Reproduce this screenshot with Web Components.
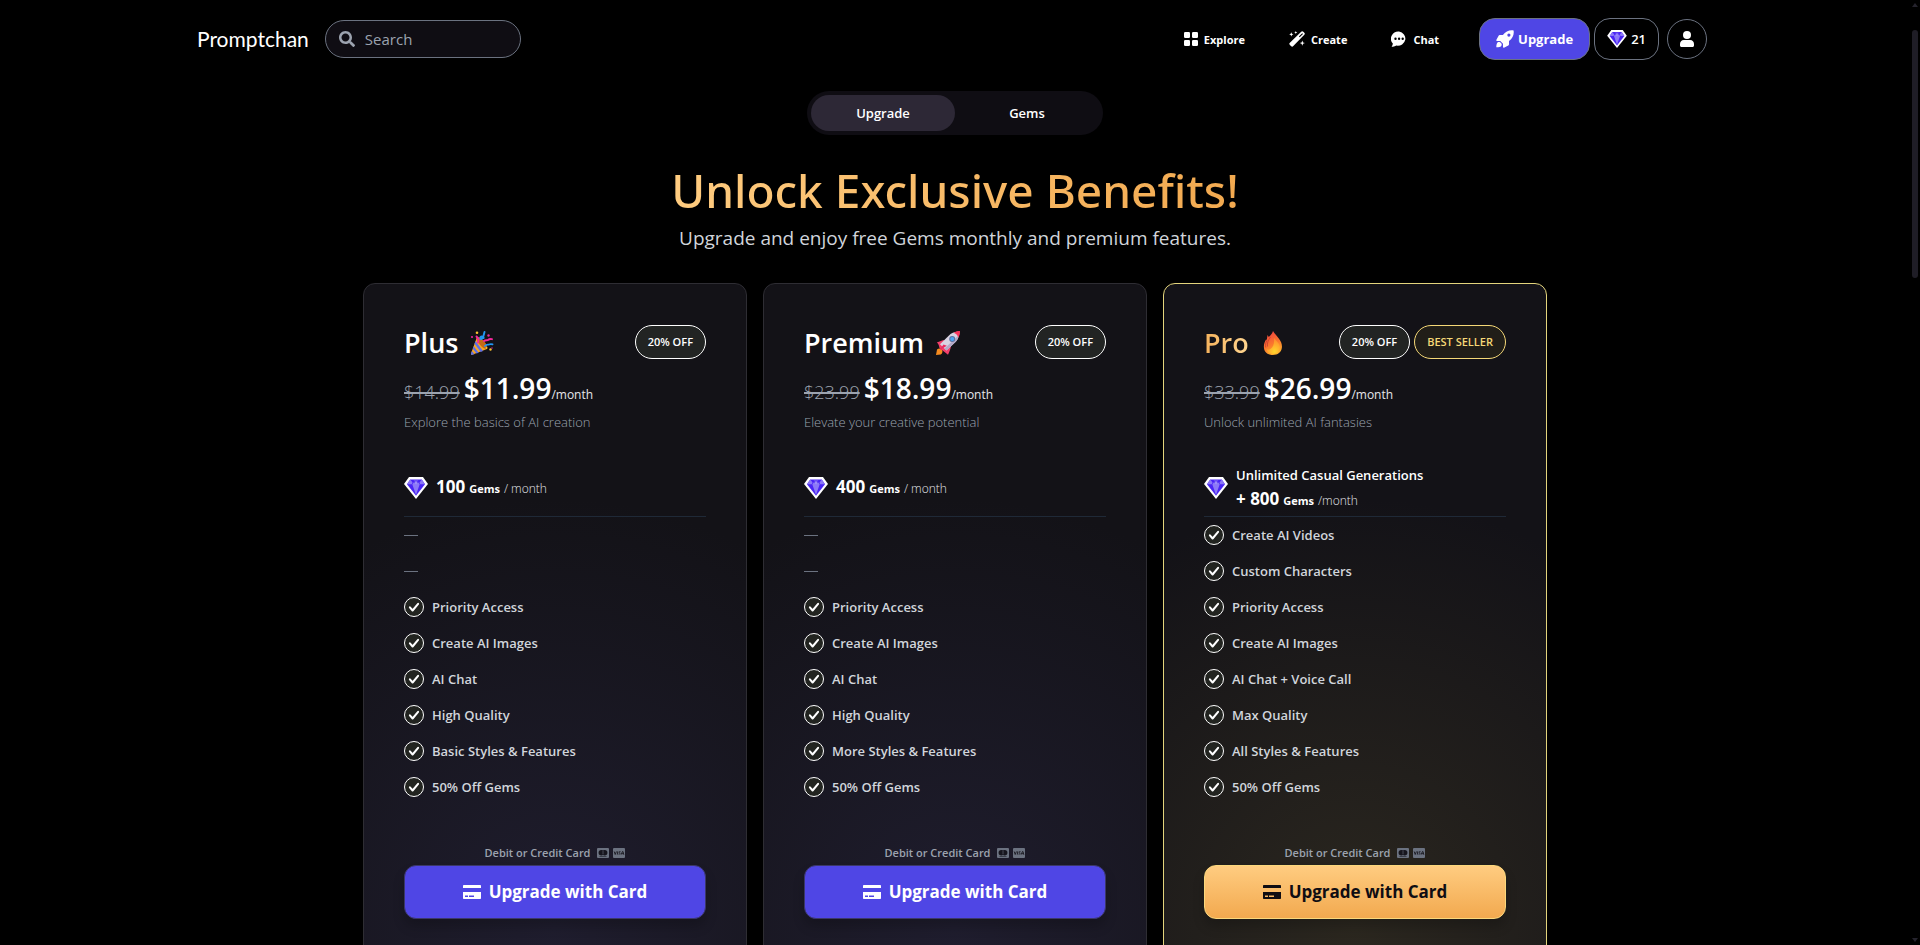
<!DOCTYPE html>
<html lang="en">
<head>
<meta charset="UTF-8">
<meta name="viewport" content="width=device-width, initial-scale=1.0">
<title>Promptchan - Upgrade</title>
<style>
    * { box-sizing: border-box; }
    body {
        margin: 0;
        background: #000;
        color: #fff;
        font-family: "Open Sans", "Noto Sans", sans-serif;
        font-size: 13px;
    }
</style>
</head>
<body>
<app-shell>
    <site-header slot="header">
        <search-box placeholder="Search"></search-box>
        <nav-link slot="links" icon="grid" href="#explore">Explore</nav-link>
        <nav-link slot="links" icon="wand" href="#create">Create</nav-link>
        <nav-link slot="links" icon="chat" href="#chat">Chat</nav-link>
        <header-button slot="actions" variant="primary" icon="rocket">Upgrade</header-button>
        <header-button slot="actions" icon="gem">21</header-button>
        <header-button slot="actions" variant="round" icon="user" label="Account"></header-button>
    </site-header>

    <plan-tabs></plan-tabs>
    <page-heading>
        Unlock Exclusive Benefits!
        <span slot="subtitle">Upgrade and enjoy free Gems monthly and premium features.</span>
    </page-heading>

    <plan-grid>
        <plan-card name="Plus" emoji="party" old-price="$14.99" price="$11.99" gems="100"
            description="Explore the basics of AI creation">
            <plan-feature empty></plan-feature>
            <plan-feature empty></plan-feature>
            <plan-feature>Priority Access</plan-feature>
            <plan-feature>Create AI Images</plan-feature>
            <plan-feature>AI Chat</plan-feature>
            <plan-feature>High Quality</plan-feature>
            <plan-feature>Basic Styles &amp; Features</plan-feature>
            <plan-feature>50% Off Gems</plan-feature>
        </plan-card>
        <plan-card name="Premium" emoji="ship" old-price="$23.99" price="$18.99" gems="400"
            description="Elevate your creative potential">
            <plan-feature empty></plan-feature>
            <plan-feature empty></plan-feature>
            <plan-feature>Priority Access</plan-feature>
            <plan-feature>Create AI Images</plan-feature>
            <plan-feature>AI Chat</plan-feature>
            <plan-feature>High Quality</plan-feature>
            <plan-feature>More Styles &amp; Features</plan-feature>
            <plan-feature>50% Off Gems</plan-feature>
        </plan-card>
        <plan-card featured name="Pro" emoji="fire" old-price="$33.99" price="$26.99" gems="800"
            bonus="Unlimited Casual Generations" description="Unlock unlimited AI fantasies">
            <plan-feature>Create AI Videos</plan-feature>
            <plan-feature>Custom Characters</plan-feature>
            <plan-feature>Priority Access</plan-feature>
            <plan-feature>Create AI Images</plan-feature>
            <plan-feature>AI Chat + Voice Call</plan-feature>
            <plan-feature>Max Quality</plan-feature>
            <plan-feature>All Styles &amp; Features</plan-feature>
            <plan-feature>50% Off Gems</plan-feature>
        </plan-card>
    </plan-grid>
</app-shell>

<script>
const ICONS = {
    search: ['0 0 512 512', '<path fill="currentColor" d="M505 442.700 405.300 343c-4.500-4.500-10.600-7-17-7H372c27.600-35.300 44-79.700 44-128C416 93.100 322.900 0 208 0S0 93.100 0 208s93.100 208 208 208c48.300 0 92.700-16.400 128-44v16.300c0 6.400 2.500 12.500 7 17l99.700 99.700c9.400 9.400 24.600 9.400 33.900 0l28.300-28.300c9.400-9.400 9.400-24.600.1-34zM208 336c-70.700 0-128-57.200-128-128 0-70.700 57.200-128 128-128 70.700 0 128 57.200 128 128 0 70.700-57.200 128-128 128z"/>'],
    grid: ['0 0 14 14', '<g fill="currentColor"><rect width="6" height="6" rx="1.300"/><rect x="8" width="6" height="6" rx="1.300"/><rect y="8" width="6" height="6" rx="1.300"/><rect x="8" y="8" width="6" height="6" rx="1.300"/></g>'],
    wand: ['0 0 16 16', '<g fill="currentColor"><path fill-rule="evenodd" d="M12.200.700a1.500 1.500 0 0 1 2.100 0l1 1a1.500 1.500 0 0 1 0 2.100L4.300 15.100a1.600 1.600 0 0 1-2.300 0L.9 14a1.600 1.600 0 0 1 0-2.300zM13.200 2.200 9.900 5.500l.8.800L14 3z"/><path d="m2.300 1.200.6 1.500 1.500.6-1.500.6-.6 1.500-.6-1.500-1.500-.6 1.500-.6zM6.800 0l.4 1.100 1.100.4-1.100.4-.4 1.100-.4-1.100-1.100-.4 1.100-.4zM13.300 9.500l.7 1.900 1.900.7-1.900.7-.7 1.900-.7-1.900-1.900-.7 1.900-.7z"/></g>'],
    chat: ['0 0 16 16', '<path fill="currentColor" fill-rule="evenodd" d="M8 .500a7.500 7 0 1 1-2.600 14.100C4 15.600 2.100 15.900.6 15.500c.8-.9 1.300-2 1.200-3.100A7.500 7.200 0 0 1 8 .500zM4.500 6.500a1.200 1.200 0 1 0 0 2.400 1.200 1.200 0 0 0 0-2.400zm3.600 0a1.200 1.200 0 1 0 0 2.400 1.200 1.200 0 0 0 0-2.400zm3.600 0a1.200 1.200 0 1 0 0 2.400 1.200 1.200 0 0 0 0-2.400z"/>'],
    rocket: ['0 0 18 18', '<path fill="currentColor" fill-rule="evenodd" d="M17.600.4C13.500-.3 9.600 1.300 6.900 5H3.700c-.5 0-.9.300-1.100.7L.3 10c-.2.500.1 1 .7 1h3.300L7 13.700V17c0 .6.500.9 1 .7l4.300-2.300c.4-.2.700-.6.700-1.100v-3.200c3.700-2.700 5.300-6.600 4.600-10.700zM12.900 6.700a1.600 1.600 0 1 1 0-3.200 1.600 1.600 0 0 1 0 3.200zM1.700 12.200c1.200-.6 2.700-.2 3.300.8.900.8 1 2.200.1 3.200-.9.900-3 1.200-4.800 1.100 0-1.900.3-4 1.400-5.100z"/>'],
    user: ['0 0 14 16', '<g fill="currentColor"><circle cx="7" cy="4" r="4"/><path d="M3.800 9h6.400C12.500 9 14 10.700 14 13v1.500c0 .8-.7 1.500-1.500 1.500h-11C.7 16 0 15.300 0 14.500V13c0-2.300 1.500-4 3.800-4z"/></g>'],
    gem: ['0 0 24 22', '<path fill="#fff" d="M5 0h14l5 7-12 15L0 7z"/><path fill="#4a25f5" d="M6.200 2.500h11.600L21 7.200l-9 11.600L3 7.200z"/><path fill="#8b78f7" d="M3 7.200 6.200 2.500 8.500 5.500 7.800 7.200zM21 7.200l-3.200-4.700-2.300 3 .7 1.700zM8.300 7.200l1.300-1.700h4.800l1.300 1.700L12 18z"/><path fill="#6a4df7" d="m9.500 3 2.500 3.800L14.500 3z"/><path fill="#a99bfa" d="m12 3.800 1 2.200-1 1.500L11 6z"/>'],
    check: ['0 0 20 20', '<circle cx="10" cy="10" r="9.500" fill="#222420" stroke="#fff"/><path fill="none" stroke="#fff" stroke-width="2" stroke-linecap="round" stroke-linejoin="round" d="m5.900 10.300 2.700 3.200 5.500-6.700"/>'],
    card: ['0 0 18 14', '<path fill="currentColor" fill-rule="evenodd" d="M1 0h16c.6 0 1 .4 1 1v2H0V1c0-.6.400-1 1-1zM0 7h18v6c0 .6-.4 1-1 1H1c-.6 0-1-.4-1-1zm2 3.500V12h3v-1.500zm4 0V12h5v-1.500z"/>'],
    mastercard: ['0 0 12 10', '<rect width="12" height="10" rx="1" fill="#6b7280"/><circle cx="4.300" cy="4.700" r="2.700" fill="#17161e"/><circle cx="7.700" cy="4.700" r="2.700" fill="#17161e"/><path stroke="#6b7280" stroke-width=".6" d="M6 3v3.400"/><path stroke="#3d414c" d="M2.500 8.500h7"/>'],
    visa: ['0 0 12 10', '<rect width="12" height="10" rx="1" fill="#6b7280"/><path fill="none" stroke="#17161e" stroke-width=".9" d="m1.200 3.500 1 3 1.200-3M4.800 3.300l-.5 3.300M7.500 3.700c-1.600-.5-2 .8-.9 1.200 1 .5.300 1.600-1 1.200M8 6.700l1.500-3.200h.5l.8 3.200M9 5.700h1.500"/>'],
    party: ['0 0 24 24', '<path fill="#f5a623" d="M7 6 1 22.500c-.3.900.4 1.500 1.200 1.200L17 18C15 12 12 8 7 6z"/><path fill="#5b6ee8" d="m5.500 10 7.500 10-2.300.9-6.200-8.200zM3.700 15.200l5 6.500-2.200.8-3.700-4.800zM1.900 20l2.500 3.200-2.200.6c-.8.200-1.500-.4-1.200-1.300z"/><ellipse cx="12" cy="12" rx="2.800" ry="7.500" transform="rotate(-40 12 12)" fill="#c46a16"/><path fill="none" stroke="#f3289b" stroke-width="1.900" stroke-linecap="round" d="M6.500 5.500c1.500 1.500 2.200 4 1.500 6M14 10c2-1.500 3-.2 4-1 1.300-1.200 2.500-1.300 4-.8"/><path fill="none" stroke="#2196f3" stroke-width="1.900" stroke-linecap="round" d="M14.500 1c-.6 2-.6 4-2 6-1 2-3 .6-2-.8 1-1.200 3-.5 3.200.8M15 15c1.500-2 3-1 4-1.500 1.300-.6 2-.6 3.500-.2"/><g fill="#f9c22e"><circle cx="7" cy="1.800" r="1.300"/><circle cx="16.500" cy="17" r="1"/><circle cx="20.500" cy="18.500" r="1.200"/></g><g fill="#e9289b"><circle cx="18.500" cy="4.500" r="1.200"/><circle cx="2" cy="6" r="1.100"/><circle cx="22" cy="17" r=".7"/></g>'],
    ship: ['0 0 24 24', '<path fill="#f58b1f" d="M1 18.500c1.500-1.500 4-1.400 5 .3 1 1.800.4 3.400-1.200 4.700L0 24z"/><path fill="#f43f6b" d="M7.500 9 .8 11.500c1.700 1.200 2.200 2.900 2.700 5.500l8.500 6.800c1.200-2.800 2.700-5.600 3-9z"/><path fill="#d9d3e3" d="M14.500 3C18 1 21 .4 23.500.500c.2 3.500-1 7-3.500 10l-9.500 9-6.500-6.300z"/><path fill="#b4a8c7" d="M20 10.500 10.500 19.500l-2-2L22.500 4.500c-.4 2.200-1.200 4.200-2.500 6z"/><path fill="#f8355c" d="M17.500 1.700C20 .4 22 0 24 0c0 2.300-.4 4.200-1.500 6.400-.8-2.200-2.600-4-5-4.700z"/><path fill="#e92d62" d="m7.500 13.500 3.300 1.300-7 4.500c1-2 2.300-4 3.700-5.800z"/><circle cx="16.200" cy="8" r="3" fill="#5c6f9e"/><circle cx="16.200" cy="8" r="2" fill="#4ca7f2"/>'],
    fire: ['0 0 20 24', '<defs><linearGradient id="flame" x1=".3" y1="0" x2=".7" y2="1"><stop offset="0" stop-color="#ee3f40"/><stop offset=".55" stop-color="#fb7a2c"/><stop offset="1" stop-color="#ffb52b"/></linearGradient><radialGradient id="core" cx=".6" cy=".85" r=".8"><stop offset="0" stop-color="#ffd52d"/><stop offset="1" stop-color="#ff8a2c"/></radialGradient></defs><path fill="url(#flame)" d="M10 0c1.500 2.600 4 5 6 7.700 2.200 3 3.200 5.500 2.900 8.800-.5 4.800-4.300 7.500-9 7.500-5 0-8.800-2.800-9-7.800-.2-3.500 1-6 2.300-8L3.700 9.500 4.500 4l1.300 2C7.500 4.500 9.200 2.700 10 0z"/><path fill="none" stroke="#c93b30" stroke-width=".8" d="M4 9.500c-1.500 2.500-1.700 4.500-1.200 7M7.500 6c-2.500 3.500-3.500 6-3 9.500"/><path fill="url(#core)" d="M11 7c2.500 3 6.300 6 5.900 10-.4 3.900-3.100 6-6.900 6-3.700 0-6-1.800-6.300-5 .9 1 2 1 3.200.3C10.500 16 11.500 12.500 11 7z"/>']
};

class AppIcon extends HTMLElement {
    static get observedAttributes() {
        return ['name'];
    }

    constructor() {
        super();
        this.attachShadow({ mode: 'open' });
    }

    attributeChangedCallback() {
        const [box, body] = ICONS[this.getAttribute('name')] || ['0 0 16 16', ''];
        this.shadowRoot.innerHTML = `
            <style>
                :host { display: inline-block; flex: none; width: 16px; height: 16px; }
                svg { display: block; width: 100%; height: 100%; }
            </style>
            <svg viewBox="${box}" aria-hidden="true">${body}</svg>
        `;
    }
}

class AppShell extends HTMLElement {
    connectedCallback() {
        this.attachShadow({ mode: 'open' });
        this.shadowRoot.innerHTML = `
            <style>
                :host {
                    display: grid;
                    grid-template-columns: 1fr 10px;
                    height: 100vh;
                    overflow: hidden;
                }
                .page { display: flex; flex-direction: column; min-width: 0; min-height: 0; }
                main { display: flex; flex-direction: column; align-items: center; padding: 13px 16px 40px; }
                .scrollbar {
                    display: flex;
                    flex-direction: column;
                    align-items: center;
                    justify-content: space-between;
                    box-sizing: border-box;
                    padding: 3px 0;
                    height: 100vh;
                }
                .arrow { border: 3px solid transparent; border-top: 0; border-bottom: 4px solid #25232d; }
                .arrow.down { transform: rotate(180deg); }
                .track { flex: 1; padding: 23px 0; }
                .thumb { width: 6px; height: 28%; border-radius: 3px; background: #1f1d26; }
            </style>
            <div class="page">
                <slot name="header"></slot>
                <main><slot></slot></main>
            </div>
            <div class="scrollbar" aria-hidden="true">
                <div class="arrow"></div>
                <div class="track"><div class="thumb"></div></div>
                <div class="arrow down"></div>
            </div>
        `;
    }
}

class SiteHeader extends HTMLElement {
    connectedCallback() {
        this.attachShadow({ mode: 'open' });
        this.shadowRoot.innerHTML = `
            <style>
                :host { display: block; }
                header {
                    display: flex;
                    align-items: center;
                    justify-content: space-between;
                    box-sizing: border-box;
                    width: 80%;
                    max-width: 1516px;
                    margin: 0 auto;
                    padding-right: 6px;
                    height: 78px;
                }
                .left, .right, nav, .actions { display: flex; align-items: center; }
                .left { gap: 16px; }
                .logo {
                    color: #fff;
                    font: 400 21px/24px Lato, sans-serif;
                    text-decoration: none;
                }
                .right { gap: 40px; }
                nav { gap: 44px; }
                .actions { gap: 4px; }
                ::slotted([variant="round"]) { margin-left: 4px; }
            </style>
            <header>
                <div class="left">
                    <a class="logo" href="#home">Promptchan</a>
                    <slot></slot>
                </div>
                <div class="right">
                    <nav><slot name="links"></slot></nav>
                    <div class="actions"><slot name="actions"></slot></div>
                </div>
            </header>
        `;
    }
}

class SearchBox extends HTMLElement {
    connectedCallback() {
        const placeholder = this.getAttribute('placeholder') || '';
        this.attachShadow({ mode: 'open' });
        this.shadowRoot.innerHTML = `
            <style>
                :host { display: block; }
                label {
                    display: flex;
                    align-items: center;
                    gap: 10px;
                    box-sizing: border-box;
                    width: 196px;
                    height: 38px;
                    padding: 0 13px;
                    border: 1px solid #6b7280;
                    border-radius: 19px;
                    background: #0f0d13;
                    color: #9ca3af;
                }
                input {
                    flex: 1;
                    min-width: 0;
                    padding: 0;
                    border: 0;
                    outline: 0;
                    background: none;
                    color: #fff;
                    font: 400 15px/24px "Open Sans", sans-serif;
                }
                input::placeholder { color: #9ca3af; }
            </style>
            <label>
                <app-icon name="search"></app-icon>
                <input type="search" aria-label="${placeholder}" placeholder="${placeholder}">
            </label>
        `;
    }
}

class NavLink extends HTMLElement {
    connectedCallback() {
        this.attachShadow({ mode: 'open' });
        this.shadowRoot.innerHTML = `
            <style>
                :host { display: block; }
                a {
                    display: flex;
                    align-items: center;
                    gap: 6px;
                    color: #fff;
                    font-size: 11px;
                    font-weight: 700;
                    text-decoration: none;
                }
                app-icon[name="grid"] { width: 14px; height: 14px; }
            </style>
            <a href="${this.getAttribute('href')}">
                <app-icon name="${this.getAttribute('icon')}"></app-icon>
                <slot></slot>
            </a>
        `;
    }
}

class HeaderButton extends HTMLElement {
    connectedCallback() {
        const label = this.getAttribute('label');
        this.attachShadow({ mode: 'open' });
        this.shadowRoot.innerHTML = `
            <style>
                :host { display: block; }
                button {
                    display: flex;
                    align-items: center;
                    justify-content: center;
                    gap: 4px;
                    height: 42px;
                    padding: 0 12px;
                    border: 1px solid #6b7280;
                    border-radius: 16px;
                    background: none;
                    color: #fff;
                    font: 600 13px/20px "Open Sans", sans-serif;
                    cursor: pointer;
                }
                :host([variant="primary"]) button {
                    padding: 0 16px;
                    background: #4f46e5;
                    font-weight: 700;
                }
                :host([variant="round"]) button { width: 40px; height: 40px; padding: 0; border-radius: 50%; }
                app-icon[name="rocket"] { width: 18px; height: 18px; }
                app-icon[name="gem"] { width: 20px; height: 18px; }
                app-icon[name="user"] { width: 14px; height: 16px; }
            </style>
            <button type="button" ${label ? `aria-label="${label}"` : ''}>
                <app-icon name="${this.getAttribute('icon')}"></app-icon>
                <slot></slot>
            </button>
        `;
    }
}

class PlanTabs extends HTMLElement {
    connectedCallback() {
        this.attachShadow({ mode: 'open' });
        this.shadowRoot.innerHTML = `
            <style>
                :host { display: block; }
                div { display: flex; padding: 4px; border-radius: 22px; background: #0f0d13; }
                button {
                    width: 144px;
                    height: 36px;
                    border: 0;
                    border-radius: 18px;
                    background: none;
                    color: #fff;
                    font: 600 13px/20px "Open Sans", sans-serif;
                    cursor: pointer;
                }
                button[aria-selected="true"] { background: #2d2836; }
            </style>
            <div role="tablist">
                <button role="tab" type="button" aria-selected="true">Upgrade</button>
                <button role="tab" type="button" aria-selected="false">Gems</button>
            </div>
        `;

        const tabs = this.shadowRoot.querySelectorAll('button');
        tabs.forEach(tab => tab.addEventListener('click', () => {
            tabs.forEach(other => other.setAttribute('aria-selected', other === tab));
        }));
    }
}

class PageHeading extends HTMLElement {
    connectedCallback() {
        this.attachShadow({ mode: 'open' });
        this.shadowRoot.innerHTML = `
            <style>
                :host { display: block; padding: 23px 0 29px; text-align: center; }
                h1 {
                    margin: 0;
                    background: linear-gradient(to right, #ffcc80, #f2a94f);
                    -webkit-background-clip: text;
                    background-clip: text;
                    color: transparent;
                    font-family: "Noto Sans", sans-serif;
                    font-size: 46px;
                    font-weight: 500;
                    line-height: 64px;
                }
                p { margin: 0; color: #d1d5db; font-size: 19px; line-height: 32px; }
            </style>
            <h1><slot></slot></h1>
            <p><slot name="subtitle"></slot></p>
        `;
    }
}

class PlanGrid extends HTMLElement {
    connectedCallback() {
        this.attachShadow({ mode: 'open' });
        this.shadowRoot.innerHTML = `
            <style>
                :host {
                    display: grid;
                    grid-template-columns: repeat(3, minmax(0, 1fr));
                    gap: 16px;
                    width: 100%;
                    max-width: 1184px;
                }
            </style>
            <slot></slot>
        `;
    }
}

class PlanBadge extends HTMLElement {
    connectedCallback() {
        this.attachShadow({ mode: 'open' });
        this.shadowRoot.innerHTML = `
            <style>
                :host {
                    display: block;
                    padding: 8px 12px;
                    border: 1px solid #fff;
                    border-radius: 17px;
                    background: #222423;
                    color: #fff;
                    font-size: 11px;
                    font-weight: 600;
                    line-height: 16px;
                    white-space: nowrap;
                }
                :host([gold]) { border-color: #f5d877; background: #211e18; color: #f5d877; }
            </style>
            <slot></slot>
        `;
    }
}

class PlanFeature extends HTMLElement {
    connectedCallback() {
        const empty = this.hasAttribute('empty');
        this.attachShadow({ mode: 'open' });
        this.shadowRoot.innerHTML = `
            <style>
                :host {
                    display: flex;
                    align-items: center;
                    gap: 8px;
                    height: 36px;
                    color: #d1d5db;
                    font-size: 13px;
                    font-weight: 600;
                }
                app-icon { width: 20px; height: 20px; }
                .none { width: 14px; height: 1px; background: #6b7280; }
            </style>
            ${empty ? '<span class="none"></span>' : '<app-icon name="check"></app-icon><slot></slot>'}
        `;
    }
}

class PlanCard extends HTMLElement {
    connectedCallback() {
        this.attachShadow({ mode: 'open' });
        this.render();
    }

    render() {
        const featured = this.hasAttribute('featured');
        const bonus = this.getAttribute('bonus');

        this.shadowRoot.innerHTML = `
            <style>
                :host {
                    display: block;
                    box-sizing: border-box;
                    padding: 40px;
                    border: 1px solid #2e2d33;
                    border-radius: 12px;
                    background: radial-gradient(ellipse 110% 60% at 50% 90%, #1f1d2e, #131217);
                }
                :host([featured]) {
                    border-color: #e3d47c;
                    background: radial-gradient(ellipse 110% 60% at 50% 90%, #2b271f, #131217);
                }
                .head, .title, .badges, .gems, .pay { display: flex; align-items: center; }
                .head { justify-content: space-between; height: 36px; }
                .title { gap: 12px; padding-top: 2px; }
                h2 { margin: 0; font-size: 27px; font-weight: 600; line-height: 36px; }
                :host([featured]) h2 {
                    background: linear-gradient(to right, #f5b25c, #ffd591);
                    -webkit-background-clip: text;
                    background-clip: text;
                    color: transparent;
                }
                .title app-icon { width: 24px; height: 24px; }
                .badges { gap: 4px; }
                .price { display: flex; align-items: baseline; margin-top: 8px; line-height: 20px; }
                s {
                    margin-right: 4px;
                    color: #9ca3af;
                    font-size: 18px;
                    font-weight: 300;
                    text-decoration-thickness: 2px;
                }
                strong { font-size: 28px; font-weight: 600; line-height: 40px; }
                .price small { color: #e5e7eb; font-size: 12px; }
                .desc { margin: 4px 0 0; color: #9ca3af; font-size: 13px; font-weight: 300; line-height: 20px; }
                .gems {
                    gap: 8px;
                    box-sizing: border-box;
                    height: 65px;
                    margin-top: 20px;
                    padding-top: 8px;
                    border-bottom: 1px solid #1f2937;
                }
                .gems app-icon { width: 24px; height: 22px; }
                .amount { display: flex; align-items: baseline; gap: 4px; line-height: 24px; }
                .amount b { font-size: 17px; }
                .amount .unit { font-size: 11px; }
                .amount small { color: #e5e7eb; font-size: 12px; font-weight: 300; }
                .bonus { font-size: 13px; font-weight: 600; line-height: 24px; }
                .pay {
                    justify-content: center;
                    gap: 4px;
                    margin-top: 38px;
                    color: #9ca3af;
                    font-size: 11px;
                    font-weight: 600;
                    line-height: 20px;
                }
                .pay app-icon { width: 12px; height: 10px; }
                .pay span { margin-right: 3px; }
                button {
                    display: flex;
                    align-items: center;
                    justify-content: center;
                    gap: 8px;
                    box-sizing: border-box;
                    width: 100%;
                    height: 54px;
                    margin: 2px 0 40px;
                    border: 1px solid #3b3869;
                    border-radius: 12px;
                    background: #4f46e5;
                    box-shadow: 0 8px 12px rgba(0, 0, 0, 0.2);
                    color: #fff;
                    font: 700 17px/24px "Open Sans", sans-serif;
                    cursor: pointer;
                }
                :host([featured]) button {
                    border-color: #fbd87c;
                    background: linear-gradient(#ffcc80, #f2a94f);
                    color: #0f0d13;
                }
                button app-icon { width: 18px; height: 14px; }
            </style>
            <div class="head">
                <div class="title">
                    <h2>${this.getAttribute('name')}</h2>
                    <app-icon name="${this.getAttribute('emoji')}"></app-icon>
                </div>
                <div class="badges">
                    <plan-badge>20% OFF</plan-badge>
                    ${featured ? '<plan-badge gold>BEST SELLER</plan-badge>' : ''}
                </div>
            </div>
            <div class="price">
                <s>${this.getAttribute('old-price')}</s>
                <strong>${this.getAttribute('price')}</strong>
                <small>/month</small>
            </div>
            <p class="desc">${this.getAttribute('description')}</p>
            <div class="gems">
                <app-icon name="gem"></app-icon>
                <div>
                    ${bonus ? `<div class="bonus">${bonus}</div>` : ''}
                    <div class="amount">
                        <b>${bonus ? '+ ' : ''}${this.getAttribute('gems')}</b>
                        <b class="unit">Gems</b>
                        <small>${bonus ? '/month' : '/ month'}</small>
                    </div>
                </div>
            </div>
            <slot></slot>
            <div class="pay">
                <span>Debit or Credit Card</span>
                <app-icon name="mastercard"></app-icon>
                <app-icon name="visa"></app-icon>
            </div>
            <button type="button">
                <app-icon name="card"></app-icon>
                Upgrade with Card
            </button>
        `;
    }
}

customElements.define('app-icon', AppIcon);
customElements.define('app-shell', AppShell);
customElements.define('site-header', SiteHeader);
customElements.define('search-box', SearchBox);
customElements.define('nav-link', NavLink);
customElements.define('header-button', HeaderButton);
customElements.define('plan-tabs', PlanTabs);
customElements.define('page-heading', PageHeading);
customElements.define('plan-grid', PlanGrid);
customElements.define('plan-badge', PlanBadge);
customElements.define('plan-feature', PlanFeature);
customElements.define('plan-card', PlanCard);
</script>
</body>
</html>
